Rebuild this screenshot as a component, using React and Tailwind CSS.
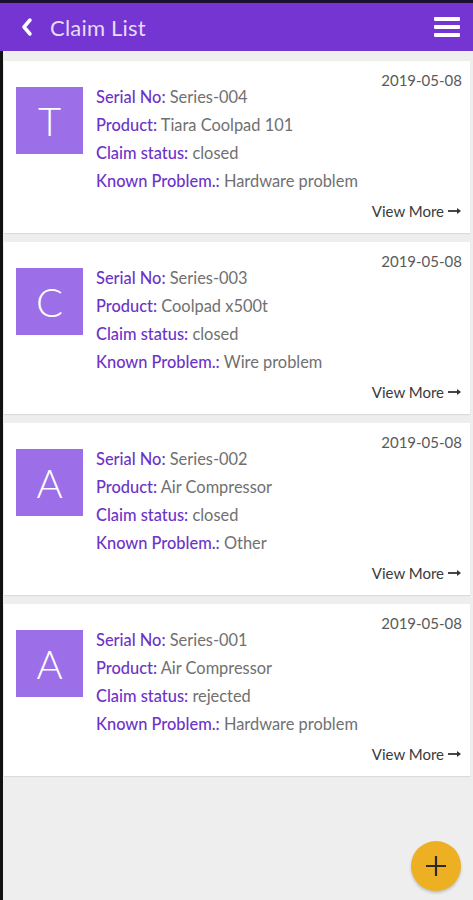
import React from "react";

const claims = [
  { letter: "T", serial: "Series-004", product: "Tiara Coolpad 101", status: "closed", problem: "Hardware problem" },
  { letter: "C", serial: "Series-003", product: "Coolpad x500t", status: "closed", problem: "Wire problem" },
  { letter: "A", serial: "Series-002", product: "Air Compressor", status: "closed", problem: "Other" },
  { letter: "A", serial: "Series-001", product: "Air Compressor", status: "rejected", problem: "Hardware problem" },
];

function Row({ label, value }) {
  return (
    <div className="leading-[28px] whitespace-nowrap">
      <span className="text-[#6d33c8] font-medium">{label}</span>
      <span className="text-[#707070]"> {value}</span>
    </div>
  );
}

function Card({ c }) {
  return (
    <div className="bg-white pl-3 pr-[8px] pt-[9px] pb-[11px] shadow-[0_1px_1px_rgba(0,0,0,0.08)]">
      <div className="flex items-start">
        <div className="mt-[17px] w-[67px] h-[67px] bg-[#9c6ee8] flex items-center justify-center text-white text-[40px] font-light leading-none">
          {c.letter}
        </div>
        <div className="ml-[13px] mt-[13px] flex-1 text-[16.4px]">
          <Row label="Serial No:" value={c.serial} />
          <Row label="Product:" value={c.product} />
          <Row label="Claim status:" value={c.status} />
          <Row label="Known Problem.:" value={c.problem} />
        </div>
        <div className="text-[15px] leading-[20px] text-[#5a5a5a]">2019-05-08</div>
      </div>
      <div className="mt-[5px] flex justify-end items-center leading-[22px] text-[15px] text-[#3a3a3a]">
        <span>View More</span>
        <svg width="15" height="10" viewBox="0 0 15 10" className="ml-[3px]">
          <path d="M1 5H12" stroke="#333" strokeWidth="1.8" />
          <path d="M10 2L14 5L10 8Z" fill="#333" />
        </svg>
      </div>
    </div>
  );
}

export default function App() {
  return (
    <div className="relative w-[473px] h-[900px] flex flex-col bg-[#eeeeee] overflow-hidden" style={{ fontFamily: "Lato, 'Noto Sans', sans-serif" }}>
      <div className="h-[3px] bg-[#1c1030]" />
      <div className="h-[48px] bg-[#7535d3] flex items-center pl-[20px] pr-[13px]">
        <svg width="14" height="20" viewBox="0 0 14 20">
          <path d="M10 3L4 10L10 17" stroke="white" strokeWidth="3.5" fill="none" strokeLinecap="round" strokeLinejoin="round" />
        </svg>
        <span className="ml-[16px] text-[22px] text-[#e6dbf7] tracking-[0.2px]">Claim List</span>
        <div className="ml-auto flex flex-col gap-[4px]">
          <div className="w-[26px] h-[4px] bg-white rounded-[1px]" />
          <div className="w-[26px] h-[4px] bg-white rounded-[1px]" />
          <div className="w-[26px] h-[4px] bg-white rounded-[1px]" />
        </div>
      </div>
      <div className="flex flex-1">
        <div className="w-[3px] bg-[#111]" />
        <div className="flex-1 pt-[10px] pl-[1px] pr-[3px] flex flex-col gap-[9px]">
          {claims.map((c, i) => (
            <Card key={i} c={c} />
          ))}
        </div>
      </div>
      <button className="absolute right-[12px] bottom-[9px] w-[50px] h-[50px] rounded-full bg-[#edb022] flex items-center justify-center shadow-[0_2px_3px_rgba(0,0,0,0.2)]">
        <svg width="24" height="24" viewBox="0 0 24 24">
          <path d="M12 2V22M2 12H22" stroke="#2a2a2a" strokeWidth="2.2" />
        </svg>
      </button>
    </div>
  );
}
